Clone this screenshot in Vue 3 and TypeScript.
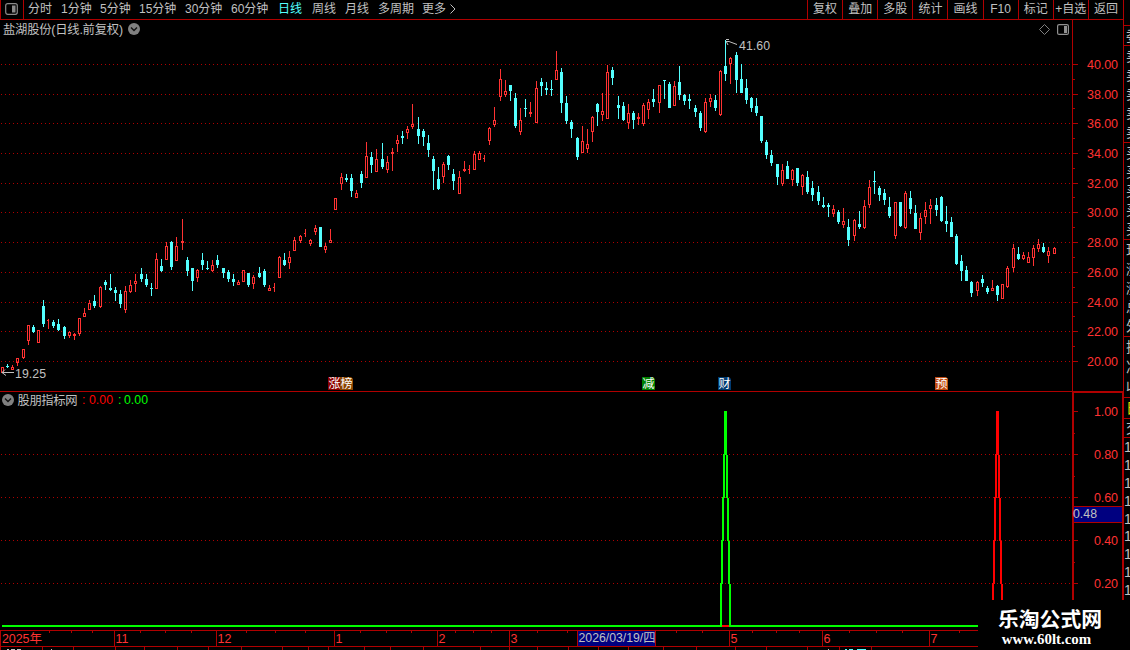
<script setup lang="ts">
import { computed } from 'vue'

type Candle = [x: number, high: number, low: number, top: number, bottom: number, up: 0 | 1]

const periods = [
  { label: '分时', width: 33 },
  { label: '1分钟', width: 39 },
  { label: '5分钟', width: 39 },
  { label: '15分钟', width: 46 },
  { label: '30分钟', width: 46 },
  { label: '60分钟', width: 47 },
  { label: '日线', width: 34 },
  { label: '周线', width: 33 },
  { label: '月线', width: 33 },
  { label: '多周期', width: 44 },
  { label: '更多', width: 27 }
]
const activePeriod = '日线'

const tools = ['复权', '叠加', '多股', '统计', '画线', 'F10', '标记', '+自选', '返回']

// x, high, low, body top, body bottom, up
const candles: Candle[] = [
  [2, 367, 373, 367, 373, 1], [7, 364, 368, 366, 367, 0], [12, 365, 370, 367, 370, 1],
  [17, 358, 366, 358, 363, 1], [23, 349, 359, 349, 358, 1], [28, 325, 345, 325, 341, 1],
  [33, 325, 333, 327, 332, 0], [38, 330, 343, 330, 343, 1], [43, 300, 327, 306, 324, 0],
  [48, 319, 329, 320, 321, 1], [53, 320, 328, 322, 326, 0], [58, 319, 331, 324, 330, 0],
  [64, 326, 339, 327, 336, 0], [69, 331, 338, 332, 336, 1], [74, 333, 340, 334, 336, 1],
  [79, 318, 336, 318, 334, 1], [84, 308, 317, 313, 317, 1], [89, 300, 310, 303, 310, 1],
  [94, 295, 308, 301, 306, 0], [100, 286, 308, 287, 307, 1], [105, 280, 290, 282, 285, 0],
  [110, 274, 291, 288, 290, 0], [115, 287, 301, 290, 293, 0], [120, 290, 308, 294, 304, 0],
  [125, 286, 313, 291, 310, 1], [130, 280, 293, 285, 292, 1], [135, 274, 292, 281, 284, 1],
  [141, 268, 282, 274, 279, 0], [146, 274, 287, 279, 285, 0], [151, 283, 296, 288, 289, 0],
  [156, 253, 289, 259, 289, 1], [161, 259, 272, 266, 271, 0], [166, 242, 260, 246, 260, 1],
  [171, 241, 270, 242, 267, 0], [176, 237, 261, 246, 261, 1], [182, 219, 250, 241, 243, 1],
  [187, 257, 276, 260, 271, 0], [192, 268, 291, 268, 281, 0], [197, 269, 282, 270, 278, 1],
  [202, 253, 270, 260, 265, 0], [207, 261, 270, 268, 269, 0], [212, 260, 272, 265, 271, 1],
  [217, 255, 268, 260, 265, 0], [223, 268, 278, 268, 273, 0], [228, 270, 282, 272, 279, 0],
  [233, 274, 286, 279, 282, 0], [238, 280, 285, 282, 285, 1], [243, 270, 282, 270, 282, 1],
  [248, 273, 287, 273, 285, 0], [253, 275, 289, 277, 284, 1], [259, 267, 278, 273, 277, 0],
  [264, 269, 287, 271, 285, 0], [269, 285, 291, 288, 291, 1], [274, 283, 292, 287, 288, 1],
  [279, 256, 278, 257, 278, 1], [284, 253, 266, 260, 265, 0], [289, 251, 269, 257, 263, 1],
  [294, 237, 251, 240, 251, 1], [300, 235, 243, 236, 241, 1], [305, 229, 237, 233, 234, 1],
  [310, 239, 246, 240, 244, 1], [315, 225, 235, 228, 232, 1], [320, 227, 247, 227, 247, 0],
  [325, 243, 253, 246, 250, 1], [330, 229, 243, 240, 243, 1], [335, 198, 210, 198, 210, 1],
  [341, 173, 190, 177, 184, 1], [346, 174, 182, 178, 180, 0], [351, 174, 197, 178, 191, 0],
  [356, 190, 198, 193, 198, 1], [361, 171, 188, 174, 183, 0], [366, 142, 178, 156, 178, 1],
  [371, 152, 173, 157, 165, 0], [376, 149, 172, 159, 172, 1], [382, 143, 169, 159, 167, 0],
  [387, 156, 173, 162, 170, 1], [392, 148, 171, 152, 154, 1], [397, 135, 152, 140, 144, 1],
  [402, 131, 144, 136, 138, 0], [407, 126, 139, 129, 133, 1], [412, 104, 129, 124, 127, 1],
  [418, 117, 144, 129, 136, 0], [423, 129, 146, 131, 137, 0], [428, 135, 157, 143, 150, 0],
  [433, 156, 190, 159, 171, 0], [438, 167, 190, 179, 189, 0], [443, 162, 183, 164, 177, 1],
  [448, 155, 170, 156, 165, 0], [453, 169, 190, 174, 181, 0], [459, 171, 194, 177, 194, 1],
  [464, 161, 172, 169, 171, 1], [469, 165, 174, 169, 170, 1], [474, 151, 170, 154, 170, 1],
  [479, 151, 160, 153, 160, 1], [484, 155, 162, 158, 159, 1], [489, 127, 145, 128, 141, 1],
  [494, 107, 127, 120, 125, 1], [500, 69, 101, 79, 97, 1], [505, 80, 97, 91, 95, 1],
  [510, 85, 101, 85, 91, 0], [515, 93, 128, 98, 126, 0], [520, 108, 135, 120, 132, 1],
  [525, 99, 117, 108, 109, 0], [530, 102, 117, 112, 114, 1], [536, 81, 123, 88, 123, 1],
  [541, 78, 96, 82, 86, 0], [546, 82, 95, 88, 90, 0], [551, 80, 96, 89, 90, 0],
  [556, 51, 80, 70, 80, 1], [561, 68, 113, 72, 103, 0], [566, 96, 124, 103, 121, 0],
  [571, 120, 138, 122, 129, 0], [577, 137, 160, 138, 157, 0], [582, 126, 153, 141, 153, 1],
  [587, 129, 153, 144, 149, 1], [592, 116, 142, 117, 132, 1], [597, 103, 126, 104, 112, 0],
  [602, 93, 121, 111, 115, 1], [607, 65, 119, 72, 119, 1], [612, 67, 85, 70, 78, 0],
  [618, 96, 119, 105, 108, 0], [623, 102, 121, 106, 120, 0], [628, 104, 129, 113, 123, 1],
  [633, 111, 129, 113, 120, 0], [638, 113, 125, 117, 119, 1], [643, 103, 126, 105, 124, 1],
  [648, 99, 119, 102, 110, 1], [653, 89, 107, 99, 102, 0], [659, 85, 113, 85, 103, 1],
  [664, 80, 99, 80, 81, 0], [669, 82, 108, 84, 108, 0], [674, 81, 106, 86, 106, 1],
  [679, 66, 100, 82, 95, 0], [684, 94, 105, 95, 101, 0], [689, 94, 109, 99, 101, 0],
  [695, 105, 117, 108, 112, 0], [700, 111, 131, 113, 128, 0], [705, 98, 133, 102, 132, 1],
  [710, 94, 107, 98, 102, 1], [715, 95, 111, 100, 108, 0], [720, 70, 116, 71, 115, 1],
  [725, 40, 81, 66, 74, 0], [730, 57, 84, 58, 64, 1], [736, 52, 93, 55, 80, 0],
  [741, 64, 93, 79, 93, 0], [746, 79, 104, 88, 100, 0], [751, 97, 112, 98, 108, 0],
  [756, 98, 116, 106, 113, 0], [761, 116, 143, 116, 141, 0], [766, 140, 159, 142, 155, 0],
  [771, 150, 166, 155, 163, 0], [777, 164, 185, 164, 177, 0], [782, 164, 186, 170, 184, 1],
  [787, 161, 179, 166, 179, 0], [792, 169, 186, 170, 180, 1], [797, 168, 186, 168, 183, 0],
  [802, 174, 195, 175, 187, 1], [807, 171, 194, 177, 192, 0], [812, 181, 201, 188, 195, 0],
  [818, 186, 205, 192, 201, 0], [823, 197, 208, 205, 207, 0], [828, 203, 217, 205, 207, 0],
  [833, 205, 217, 209, 214, 1], [838, 210, 224, 212, 222, 0], [843, 208, 228, 221, 225, 1],
  [848, 219, 246, 227, 240, 0], [854, 219, 241, 220, 236, 1], [859, 211, 229, 224, 227, 0],
  [864, 200, 229, 206, 228, 1], [869, 180, 208, 187, 205, 1], [874, 171, 194, 181, 182, 0],
  [879, 186, 201, 188, 195, 0], [884, 189, 205, 193, 200, 0], [889, 197, 218, 207, 216, 0],
  [895, 202, 239, 202, 236, 1], [900, 202, 227, 202, 226, 0], [905, 191, 229, 193, 228, 1],
  [910, 191, 214, 198, 209, 0], [915, 205, 229, 213, 229, 0], [920, 213, 240, 218, 233, 1],
  [925, 202, 224, 210, 217, 1], [930, 199, 224, 205, 209, 1], [936, 198, 216, 205, 210, 0],
  [941, 196, 222, 197, 221, 0], [946, 206, 232, 221, 224, 0], [951, 217, 237, 222, 237, 0],
  [956, 234, 265, 236, 264, 0], [961, 255, 281, 261, 271, 0], [966, 266, 281, 270, 281, 0],
  [971, 281, 297, 282, 293, 0], [977, 281, 296, 282, 291, 1], [982, 275, 287, 279, 283, 0],
  [987, 286, 294, 288, 292, 0], [992, 280, 291, 288, 291, 1], [997, 285, 301, 286, 295, 0],
  [1002, 284, 299, 284, 299, 1], [1007, 266, 288, 268, 287, 1], [1013, 244, 272, 248, 268, 1],
  [1018, 247, 260, 254, 259, 0], [1023, 252, 260, 255, 259, 1], [1028, 252, 263, 257, 263, 1],
  [1033, 245, 266, 248, 258, 1], [1038, 239, 252, 244, 249, 1], [1043, 243, 253, 247, 252, 0],
  [1048, 247, 263, 251, 256, 1], [1054, 247, 254, 248, 254, 1]
]

function rect(x: number, y: number, w: number, h: number) {
  return `M${x} ${y}h${w}v${h}h${-w}z`
}

// falling candles are solid
const downPath = computed(() =>
  candles
    .filter((c) => !c[5])
    .map(([x, hi, lo, t, b]) => rect(x, hi, 1, lo - hi) + rect(x - 1, t, 3, b - t))
    .join('')
)

// rising candles are hollow, one pixel of outline
const upPath = computed(() =>
  candles
    .filter((c) => c[5])
    .map(([x, hi, lo, t, b]) => {
      let d = rect(x, hi, 1, t - hi) + rect(x, b, 1, lo - b)
      if (b - t === 1) return rect(x, hi, 1, lo - hi) + rect(x - 1, t, 1, 1)
      if (b - t === 2) return rect(x, hi, 1, lo - hi) + rect(x - 1, t, 3, 2)
      d += rect(x - 1, t, 1, b - t) + rect(x + 1, t, 1, b - t)
      return d + rect(x, t, 1, 1) + rect(x, b - 1, 1, 1)
    })
    .join('')
)

const priceTicks = [64, 94, 123, 153, 183, 212, 242, 272, 302, 331, 361].map((y, i) => ({
  y,
  label: (40 - i * 2).toFixed(2)
}))
const priceMinor = [79, 108, 138, 168, 197, 227, 257, 287, 316, 346]

const valueTicks = [411, 454, 497, 540, 583].map((y, i) => ({ y, label: (1 - i * 0.2).toFixed(2) }))
const valueMinor = [433, 476, 519, 562]

const badges = [
  { x: 328, text: '涨', color: '#8b0000' },
  { x: 340, text: '榜', color: '#8b4500' },
  { x: 642, text: '减', color: '#008000' },
  { x: 718, text: '财', color: '#003a70' },
  { x: 935, text: '预', color: '#c04a10' }
]

function spike(x: number) {
  let d = rect(x - 1, 411, 3, 44)
  for (let i = 1; i < 5; i++) {
    const y = 411 + i * 43
    d += rect(x - 1 - i, y, 2, 44) + rect(x + i, y + 1, 2, 43)
  }
  return d
}

const months = [
  { x: 114, label: '11' },
  { x: 216, label: '12' },
  { x: 334, label: '1' },
  { x: 437, label: '2' },
  { x: 509, label: '3' },
  { x: 729, label: '5' },
  { x: 822, label: '6' },
  { x: 929, label: '7' }
]
const weekTicks = [
  49, 71, 92, 140, 165, 191, 246, 275, 305, 360, 386, 411, 455, 473, 491, 537, 567, 676, 702, 752,
  776, 799, 849, 876, 902, 959
]
const tabTicks = [
  0, 42, 73, 115, 144, 177, 208, 241, 282, 308, 328, 364, 390, 423, 480, 509, 537, 568, 598, 628,
  663, 696, 735, 766, 807, 839, 871
]

const quoteGroups = [
  { height: 20, rows: ['委'] },
  { height: 97, rows: ['卖', '卖', '卖', '卖', '卖'] },
  { height: 97, rows: ['买', '买', '买', '买', '买'] },
  { height: 97, rows: ['现', '涨', '涨', '总', '外'] },
  { height: 61, rows: ['换', '净', '收'] },
  { height: 21, rows: ['日'], kind: 'accent' },
  { height: 19, rows: ['交'] },
  { height: 162, rows: ['1', '1', '1', '1', '1', '1', '1', '1', '1'], kind: 'ticks' }
]
</script>

<template>
  <div class="terminal">
    <div class="main">
      <header class="toolbar">
        <div class="toggle">
          <svg width="13" height="12" viewBox="0 0 13 12">
            <rect x=".7" y=".7" width="11.6" height="10.6" rx="2" fill="none" stroke="#8a8a8a" stroke-width="1.2" />
            <rect x="7" y="2.5" width="3.5" height="7" fill="#8a8a8a" />
          </svg>
        </div>
        <nav class="periods">
          <span
            v-for="p in periods"
            :key="p.label"
            class="period"
            :class="{ active: p.label === activePeriod }"
            :style="{ width: p.width + 'px' }"
          >{{ p.label }}</span>
          <svg class="more" width="7" height="10" viewBox="0 0 7 10">
            <path d="M1.5 .5L6 5L1.5 9.5" fill="none" stroke="#c0c0c0" />
          </svg>
        </nav>
        <div class="tools">
          <span v-for="t in tools" :key="t" class="tool">{{ t }}</span>
        </div>
      </header>

      <!-- K 线主图 -->
      <svg class="panel" width="1124" height="371" viewBox="0 20 1124 371">
        <g shape-rendering="crispEdges">
          <line v-for="t in priceTicks" :key="t.y" class="grid" x1="1" x2="1072" :y1="t.y + 0.5" :y2="t.y + 0.5" />
          <rect class="rule" x="1072" y="20" width="1" height="371" />
          <rect v-for="t in priceTicks" :key="t.label" class="rule" x="1073" :y="t.y" width="5" height="1" />
          <rect v-for="y in priceMinor" :key="y" class="rule" x="1073" :y="y" width="2" height="1" />
          <path :d="upPath" fill="#ff3232" />
          <path :d="downPath" fill="#54ffff" />
        </g>
        <text v-for="t in priceTicks" :key="t.label" class="scale" x="1087" :y="t.y + 5" textLength="31">{{ t.label }}</text>

        <text class="label" x="3" y="34" textLength="120">盐湖股份(日线.前复权)</text>
        <circle cx="134" cy="29" r="6" fill="#808080" />
        <path d="M131 27.5l3 3l3-3" fill="none" stroke="#111" stroke-width="1.4" />
        <path d="M1044.5 24.5l5 5l-5 5l-5-5z" fill="none" stroke="#808080" />
        <rect x="1057.6" y="24.6" width="10.8" height="9.8" rx="1.5" fill="none" stroke="#909090" stroke-width="1.2" />
        <rect x="1064" y="26" width="3" height="7" fill="#909090" />

        <path d="M726 41.5h3l4 1.5l4 1.5M726 39.5h3M726.5 42l1.5 3" fill="none" stroke="#c0c0c0" />
        <text class="label" x="739" y="50" textLength="31">41.60</text>
        <path d="M2 372.5h12M5 369.5l-3 3l4 3" fill="none" stroke="#c0c0c0" />
        <text class="label" x="15" y="378" textLength="31">19.25</text>

        <g v-for="b in badges" :key="b.x">
          <path :d="`M${b.x} 377h11l2 2v11h-13z`" :fill="b.color" />
          <text class="badge" :x="b.x + 0.5" y="388">{{ b.text }}</text>
        </g>
      </svg>

      <!-- 指标副图 -->
      <svg class="panel" width="1124" height="239" viewBox="0 391 1124 239">
        <g shape-rendering="crispEdges">
          <rect class="rule" x="0" y="391" width="1124" height="1" />
          <line v-for="t in valueTicks.slice(1)" :key="t.y" class="grid" x1="1" x2="1072" :y1="t.y + 0.5" :y2="t.y + 0.5" />
          <rect class="rule" x="1072" y="392" width="52" height="1" />
          <rect class="rule" x="1072" y="391" width="2" height="239" />
          <rect class="rule" x="1122" y="391" width="2" height="239" />
          <rect v-for="t in valueTicks" :key="t.label" class="rule" x="1074" :y="t.y" width="4" height="1" />
          <rect v-for="y in valueMinor" :key="y" class="rule" x="1074" :y="y" width="1" height="1" />
          <path :d="spike(997)" fill="#f00" />
          <path :d="spike(725)" fill="#0f0" />
          <rect x="2" y="625" width="976" height="2" fill="#0f0" />
          <rect x="722" y="625" width="7" height="2" fill="#f00" />
          <rect class="rule" x="1074" y="506" width="48" height="17" />
          <rect x="1074" y="507" width="48" height="15" fill="#000080" />
        </g>
        <text v-for="t in valueTicks" :key="t.label" class="scale" x="1094" :y="t.y + 5" textLength="24">{{ t.label }}</text>
        <text class="label" x="1073" y="518" textLength="24">0.48</text>

        <circle cx="8" cy="400" r="6" fill="#808080" />
        <path d="M5 398.5l3 3l3-3" fill="none" stroke="#111" stroke-width="1.4" />
        <text class="label" x="17.5" y="405" textLength="60">股朋指标网</text>
        <text class="label red" x="82" y="404">:</text>
        <text class="label red" x="89" y="404" textLength="24">0.00</text>
        <text class="label green" x="118" y="404">:</text>
        <text class="label green" x="124" y="404" textLength="24">0.00</text>
      </svg>

      <!-- 时间轴 -->
      <svg class="panel" width="1124" height="20" viewBox="0 630 1124 20">
        <g shape-rendering="crispEdges">
          <rect class="rule" x="0" y="630" width="1124" height="1" />
          <rect class="rule" x="0" y="646" width="1124" height="1" />
          <rect class="rule" x="0" y="630" width="1" height="16" />
          <rect v-for="m in months" :key="m.x" class="rule" :x="m.x" y="631" width="1" height="15" />
          <rect v-for="x in weekTicks" :key="x" class="rule" :x="x" y="631" width="1" height="2" />
          <rect v-for="x in tabTicks" :key="x" class="rule" :x="x" y="647" width="1" height="3" />
          <rect class="rule" x="577" y="631" width="79" height="15" />
          <rect x="578" y="631" width="77" height="15" fill="#000080" />
          <path d="M7 649h2v1h-2zM11 649h4v1h-4zM17 649h4v1h-4zM51 649h1v1h-1zM828 649h1v1h-1z" fill="#c0c0c0" />
          <path d="M845 649h2v1h-2zM849 649h4v1h-4zM857 649h9v1h-9z" fill="#54ffff" />
        </g>
        <text class="scale" x="2" y="643" textLength="40">2025年</text>
        <text v-for="m in months" :key="m.label" class="scale" :x="m.x + 1.5" y="643">{{ m.label }}</text>
        <text class="label" x="578.5" y="642" textLength="77">2026/03/19/四</text>
      </svg>
    </div>

    <aside class="quotes">
      <div
        v-for="(g, i) in quoteGroups"
        :key="i"
        class="group"
        :class="g.kind"
        :style="{ height: g.height + 'px' }"
      >
        <span v-for="(r, j) in g.rows" :key="j" class="row">{{ r }}</span>
      </div>
    </aside>

    <div class="watermark">
      <strong>乐淘公式网</strong>
      <span>www.60lt.com</span>
    </div>
  </div>
</template>

<style>
body {
  background: #000;
  overflow: hidden;
}
</style>

<style scoped>
.terminal {
  position: relative;
  display: flex;
  width: 1130px;
  height: 650px;
  overflow: hidden;
  background: #000;
  color: #c0c0c0;
  font-family: 'Liberation Sans', 'Noto Sans CJK SC', sans-serif;
  font-size: 12px;
}
.main {
  display: flex;
  flex-direction: column;
  flex: 0 0 1124px;
}

.toolbar {
  display: flex;
  box-sizing: border-box;
  height: 20px;
  border-bottom: 1px solid #b00000;
  line-height: 19px;
  white-space: nowrap;
}
.toggle {
  box-sizing: border-box;
  width: 24px;
  padding: 3px 0 0 4px;
  border: solid #b00000;
  border-width: 0 1px;
  line-height: 0;
}
.periods {
  display: flex;
  flex: 1;
  padding-left: 4px;
}
.period {
  flex: none;
}
.period.active {
  color: #54ffff;
}
.more {
  margin-top: 4px;
}
.tools {
  display: flex;
  width: 317px;
  border-right: 1px solid #b00000;
  box-sizing: border-box;
}
.tool {
  flex: 1 1 0;
  border-left: 1px solid #b00000;
  text-align: center;
}

.panel {
  display: block;
  flex: none;
}
.rule {
  fill: #b00000;
}
.grid {
  stroke: #b00000;
  stroke-dasharray: 1 3;
}
.scale {
  fill: #ff3232;
  font-size: 12.5px;
}
.label {
  fill: #c0c0c0;
  font-size: 12.3px;
}
.label.red {
  fill: #f00;
}
.label.green {
  fill: #0f0;
}
.badge {
  fill: #fff;
  font-size: 12px;
}

/* 右侧盘口，只露出左边缘 */
.quotes {
  box-sizing: border-box;
  flex: 0 0 7px;
  height: 650px;
  margin-left: -1px;
  padding-top: 25px;
  border-left: 1px solid #b00000;
  overflow: hidden;
}
.group {
  display: flex;
  flex-direction: column;
  box-sizing: border-box;
  border-top: 1px solid #b00000;
  padding-left: 2px;
}
.group.accent {
  color: #e0e000;
}
.group.ticks {
  padding-left: 0;
}
.row {
  display: flex;
  flex: 1;
  align-items: center;
  font-size: 14px;
  line-height: 14px;
}

.watermark {
  position: absolute;
  left: 978px;
  top: 600px;
  display: flex;
  flex-direction: column;
  align-items: center;
  box-sizing: border-box;
  width: 152px;
  height: 50px;
  padding: 6px 8px 0 0;
  background: #000;
  color: #fff;
}
.watermark strong {
  font-family: 'Noto Sans CJK SC', sans-serif;
  font-size: 20.8px;
  line-height: 24px;
}
.watermark span {
  margin: 1px 7px 0 0;
  font-family: 'Liberation Serif', serif;
  font-size: 14.9px;
  font-weight: bold;
  line-height: 16px;
}
</style>
